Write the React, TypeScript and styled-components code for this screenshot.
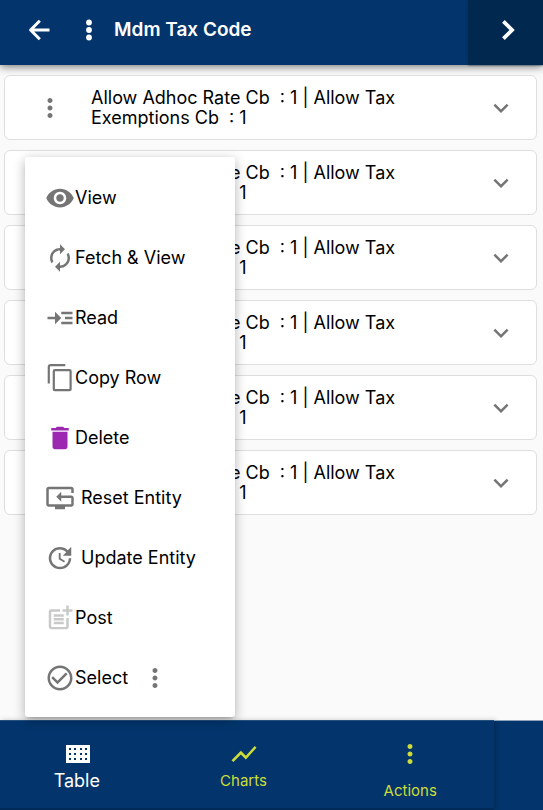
import React from 'react';
import styled, { createGlobalStyle, css } from 'styled-components';
import {
  MdAutorenew,
  MdCheckCircleOutline,
  MdDelete,
  MdExpandMore,
  MdMoreVert,
  MdPostAdd,
  MdReadMore,
  MdResetTv,
  MdShowChart,
  MdUpdate,
  MdVisibility,
} from 'react-icons/md';

const GlobalStyle = createGlobalStyle`
  * { box-sizing: border-box; }
  body {
    margin: 0;
    background: #fafafa;
    color: #000;
    font-family: Inter, "Liberation Sans", sans-serif;
    font-size: 18px;
    font-weight: 400;
    line-height: 20px;
  }
  button, a { font: inherit; color: inherit; text-decoration: none; }
  button { border: 0; padding: 0; background: none; cursor: pointer; }
  svg { display: block; flex: none; }
`;

const Screen = styled.div`
  display: flex;
  flex-direction: column;
  min-height: 100vh;
`;

const Header = styled.header`
  display: flex;
  height: 65px;
  background: #03356c;
  color: #fff;
  box-shadow: 0 2px 8px rgba(0, 0, 0, 0.5);
`;

const HeaderMain = styled.div`
  display: flex;
  flex: 1;
  align-items: center;
  padding: 0 0 5px 24px;
`;

const Title = styled.h1`
  margin: 0 0 0 10px;
  font-size: 19px;
  font-weight: 600;
  line-height: 24px;
`;

const IconButton = styled.button<{ $gap?: number }>`
  display: flex;
  align-items: center;
  justify-content: center;
  width: 30px;
  height: 30px;
  margin-left: ${({ $gap = 0 }) => $gap}px;
`;

const NextButton = styled.button`
  display: flex;
  align-items: center;
  justify-content: center;
  width: 75px;
  padding: 0 0 5px 4px;
  background: #01284f;
  box-shadow: 0 0 2px #01284f;
`;

const Content = styled.main`
  position: relative;
  flex: 1;
  padding: 10px 6px 10px 4px;
`;

const List = styled.ul`
  display: flex;
  flex-direction: column;
  gap: 10px;
  margin: 0;
  padding: 0;
  list-style: none;
`;

const Row = styled.li`
  display: flex;
  align-items: center;
  min-height: 65px;
  padding: 0 20px 0 30px;
  border: 1px solid #dedede;
  border-radius: 6px;
  background: #fff;
  color: #757575;
`;

const RowText = styled.p`
  flex: 1;
  max-width: 350px;
  margin: 0 auto 0 26px;
  color: #000;
  white-space: pre-wrap;
`;

const Menu = styled.div`
  position: absolute;
  top: 92px;
  left: 25px;
  z-index: 2;
  width: 210px;
  padding: 11px 0 9px;
  border-radius: 3px;
  background: #fff;
  box-shadow: 0 3px 3px -2px rgba(0, 0, 0, 0.2), 0 3px 12px rgba(0, 0, 0, 0.3);
`;

const MenuRow = styled.div`
  display: flex;
  align-items: center;
`;

const MenuItem = styled.button<{ $tone?: string; $spaced?: boolean }>`
  display: flex;
  align-items: center;
  height: 60px;
  padding-left: 20px;
  gap: ${({ $spaced }) => ($spaced ? 6 : 0)}px;

  svg { color: ${({ $tone = '#757575' }) => $tone}; }
`;

const MoreButton = styled(IconButton)`
  color: #757575;
`;

const Footer = styled.footer`
  display: flex;
  height: 90px;
  background: #03356c;
`;

const Tabs = styled.nav`
  display: flex;
  flex: 1;
  gap: 13px;
  padding-right: 7px;
  border-top: 1px solid #23507f;
  border-bottom: 2px solid #022a58;
  box-shadow: 2px 0 5px rgba(0, 0, 0, 0.2);
`;

const FooterEnd = styled.div`
  width: 49px;
  border-top: 1px solid #8ca3bb;
`;

const Tab = styled.a<{ $active?: boolean; $low?: boolean }>`
  display: flex;
  flex: 1;
  flex-direction: column;
  align-items: center;
  gap: ${({ $low }) => ($low ? 12 : 2)}px;
  padding-top: 18px;
  color: #cddc39;
  font-size: 15px;

  ${({ $active }) =>
    $active &&
    css`
      color: #fff;
      font-size: 18px;
    `}
`;

const BackIcon = () => (
  <svg width="30" height="30" viewBox="0 0 30 30" fill="none" stroke="#fff" strokeWidth="3">
    <path d="M25.500 15H7M15.800 5.800L6.600 15l9.200 9.200" strokeLinejoin="round" />
  </svg>
);

const NextIcon = () => (
  <svg width="30" height="30" viewBox="0 0 30 30" fill="none" stroke="#fff" strokeWidth="3.800">
    <path d="M10.400 6.300L19.100 15l-8.700 8.700" />
  </svg>
);

const OptionsIcon = () => (
  <svg width="30" height="30" viewBox="0 0 30 30" fill="#fff">
    <circle cx="15" cy="7.500" r="2.900" />
    <circle cx="15" cy="15" r="2.900" />
    <circle cx="15" cy="22.500" r="2.900" />
  </svg>
);

const CopyIcon = () => (
  <svg width="30" height="30" viewBox="0 0 30 30" fill="none" stroke="currentColor" strokeWidth="2.200">
    <path d="M3.800 20.500V4q0-1.800 1.800-1.800H20.300" />
    <rect x="8.800" y="7.200" width="16.800" height="20" rx="1" />
  </svg>
);

const TableIcon = () => (
  <svg width="30" height="30" viewBox="0 0 30 30">
    <rect x="4" y="6" width="24" height="18" fill="#fff" />
    {[9, 14, 19].map((y) =>
      [7, 12, 18, 23].map((x) => (
        <rect key={`${x}-${y}`} x={x} y={y} width="2" height="2" fill="#03356c" />
      )),
    )}
  </svg>
);

const records = [1, 2, 3, 4, 5, 6].map((id) => ({
  id,
  text: 'Allow Adhoc Rate Cb  : 1 | Allow Tax Exemptions Cb  : 1',
}));

const actions = [
  { label: 'View', icon: <MdVisibility size={30} /> },
  { label: 'Fetch & View', icon: <MdAutorenew size={30} /> },
  { label: 'Read', icon: <MdReadMore size={30} /> },
  { label: 'Copy Row', icon: <CopyIcon /> },
  { label: 'Delete', icon: <MdDelete size={30} />, tone: '#9c27b0' },
  { label: 'Reset Entity', icon: <MdResetTv size={30} />, spaced: true },
  { label: 'Update Entity', icon: <MdUpdate size={30} />, spaced: true },
  { label: 'Post', icon: <MdPostAdd size={30} />, tone: '#c9c9c9' },
];

export default function App() {
  return (
    <Screen>
      <GlobalStyle />
      <Header>
        <HeaderMain>
          <IconButton aria-label="Back">
            <BackIcon />
          </IconButton>
          <IconButton aria-label="Page options" $gap={20}>
            <OptionsIcon />
          </IconButton>
          <Title>Mdm Tax Code</Title>
        </HeaderMain>
        <NextButton aria-label="Next">
          <NextIcon />
        </NextButton>
      </Header>

      <Content>
        <List>
          {records.map(({ id, text }) => (
            <Row key={id}>
              <IconButton aria-label="Row options">
                <MdMoreVert size={30} />
              </IconButton>
              <RowText>{text}</RowText>
              <IconButton aria-label="Expand row">
                <MdExpandMore size={30} />
              </IconButton>
            </Row>
          ))}
        </List>
        <Menu>
          {actions.map(({ label, icon, tone, spaced }) => (
            <MenuItem key={label} $tone={tone} $spaced={spaced}>
              {icon}
              {label}
            </MenuItem>
          ))}
          <MenuRow>
            <MenuItem>
              <MdCheckCircleOutline size={30} />
              Select
            </MenuItem>
            <MoreButton aria-label="Select options" $gap={12}>
              <MdMoreVert size={30} />
            </MoreButton>
          </MenuRow>
        </Menu>
      </Content>

      <Footer>
        <Tabs>
          <Tab href="#table" $active>
            <TableIcon />
            Table
          </Tab>
          <Tab href="#charts">
            <MdShowChart size={30} />
            Charts
          </Tab>
          <Tab href="#actions" $low>
            <MdMoreVert size={30} />
            Actions
          </Tab>
        </Tabs>
        <FooterEnd />
      </Footer>
    </Screen>
  );
}
